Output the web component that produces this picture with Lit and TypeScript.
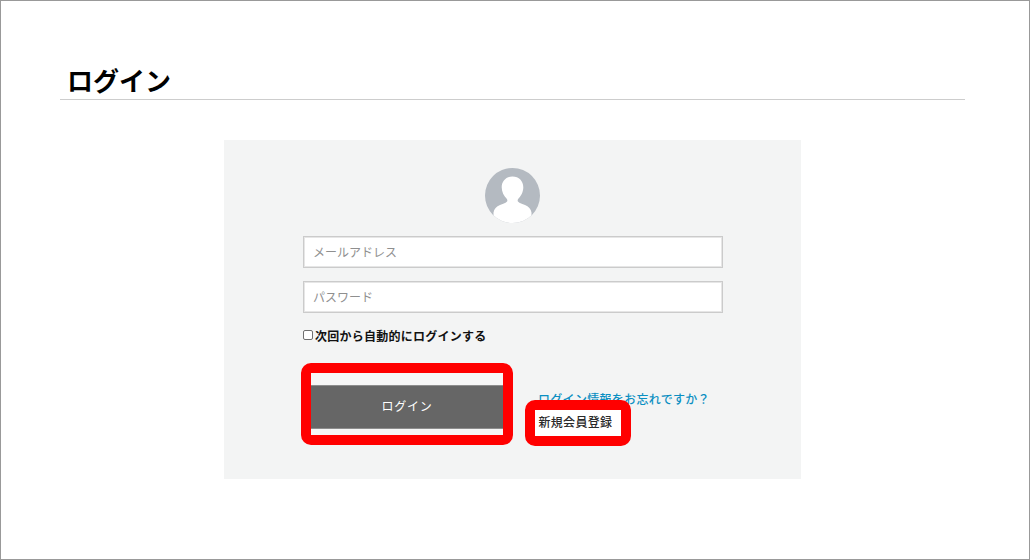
import { LitElement, html, css } from "lit";
import { customElement } from "lit/decorators.js";

@customElement("app-root")
export class AppRoot extends LitElement {
  static styles = css`
    :host {
      display: block;
      font-family: "Liberation Sans", "Noto Sans CJK JP", sans-serif;
    }
    .page {
      position: relative;
      box-sizing: border-box;
      width: 1030px;
      height: 560px;
      border: 1px solid #999;
      background: #fff;
      padding: 0 64px 0 59px;
      overflow: hidden;
    }
    h1 {
      margin: 0;
      height: 99px;
      box-sizing: border-box;
      padding: 61px 0 0 7px;
      font-size: 26px;
      line-height: 36px;
      font-weight: 700;
      color: #000;
      border-bottom: 1px solid #cdcdcd;
      font-family: "Noto Sans CJK JP", sans-serif;
    }
    .card {
      box-sizing: border-box;
      width: 577px;
      height: 339px;
      margin: 40px 0 0 164px;
      background: #f3f4f4;
      padding: 28px 78px 0 79px;
      display: flex;
      flex-direction: column;
    }
    .avatar {
      display: block;
      width: 55px;
      height: 55px;
      align-self: center;
      margin: 0 0 13px -1px;
    }
    .input {
      box-sizing: border-box;
      width: 420px;
      height: 32px;
      background: #fff;
      border: 1px solid #cbcbcb;
      box-shadow: inset 0 0 0 1px #e6e6e6;
      padding: 0 9px;
      font-size: 12px;
      line-height: 30px;
      color: #8f8f8f;
      font-family: "Noto Sans CJK JP", sans-serif;
    }
    .input + .input {
      margin-top: 13px;
    }
    .remember {
      display: flex;
      align-items: center;
      gap: 3px;
      margin-top: 12px;
      height: 20px;
      font-size: 12px;
      font-weight: 700;
      color: #111;
      font-family: "Noto Sans CJK JP", sans-serif;
      letter-spacing: 0.25px;
    }
    .box {
      box-sizing: border-box;
      width: 10px;
      height: 10px;
      margin-right: -1px;
      background: #fff;
      border: 1px solid #6f6f6f;
      border-radius: 2px;
    }
    .actions {
      display: flex;
      margin-top: 28px;
      margin-left: 8px;
    }
    .btn-wrap {
      box-sizing: border-box;
      width: 192px;
      height: 62px;
      background: #f6f6f6;
      padding-top: 12px;
    }
    .btn {
      height: 44px;
      box-sizing: border-box;
      border-top: 1px solid #8d8d8d;
      border-bottom: 1px solid #8d8d8d;
      background: #666;
      color: #fff;
      font-size: 12px;
      letter-spacing: 0.8px;
      padding-bottom: 3px;
      display: flex;
      align-items: center;
      justify-content: center;
      font-family: "Noto Sans CJK JP", sans-serif;
    }
    .links {
      margin-left: 35px;
      padding-top: 18px;
      display: flex;
      flex-direction: column;
      font-size: 12px;
      font-weight: 500;
      font-family: "Noto Sans CJK JP", sans-serif;
      letter-spacing: 0.3px;
    }
    .forgot {
      color: #0b8fc2;
      line-height: 16px;
    }
    .hl {
      position: absolute;
      box-sizing: border-box;
      border: 10px solid #f00;
      border-radius: 10px;
      pointer-events: none;
    }
    .hl-btn {
      left: 300px;
      top: 362px;
      width: 212px;
      height: 82px;
    }
    .hl-link {
      left: 524px;
      top: 399px;
      width: 106px;
      height: 46px;
    }
    .hl-fill {
      position: absolute;
      left: 534px;
      top: 409px;
      width: 86px;
      height: 26px;
      background: #fff;
    }
    .hl-text {
      position: absolute;
      left: 537.5px;
      top: 413px;
      font-size: 12px;
      line-height: 16px;
      font-weight: 500;
      color: #2a2a2a;
      letter-spacing: 0.3px;
      font-family: "Noto Sans CJK JP", sans-serif;
    }
  `;

  render() {
    return html`
      <div class="page">
        <h1>ログイン</h1>
        <div class="card">
          <svg class="avatar" viewBox="0 0 55 55" aria-hidden="true">
            <defs>
              <clipPath id="c"><circle cx="27.5" cy="27.5" r="27.500"></circle></clipPath>
            </defs>
            <circle cx="27.5" cy="27.500" r="27.500" fill="#b4bac1"></circle>
            <path
              clip-path="url(#c)"
              fill="#fff"
              d="M27.500 8.500c-6.500 0-10.800 4.700-10.800 10.800 0 4.500 2.200 8.800 4.800 11.300 1 1 1.200 2.300.3 3.200-1.300 1.400-4.200 2.300-6.800 3.300-3.600 1.400-5.900 3.800-6.500 7.400V56h38V44.500c-.6-3.600-2.900-6-6.500-7.400-2.600-1-5.500-1.900-6.800-3.300-.9-.9-.7-2.200.3-3.200 2.600-2.500 4.800-6.800 4.800-11.300 0-6.100-4.300-10.800-10.800-10.800z"
            ></path>
          </svg>
          <div class="input">メールアドレス</div>
          <div class="input">パスワード</div>
          <div class="remember"><span class="box"></span>次回から自動的にログインする</div>
          <div class="actions">
            <div class="btn-wrap"><div class="btn">ログイン</div></div>
            <div class="links">
              <span class="forgot">ログイン情報をお忘れですか？</span>
            </div>
          </div>
        </div>
        <div class="hl-fill"></div>
        <div class="hl-text">新規会員登録</div>
        <div class="hl hl-btn"></div>
        <div class="hl hl-link"></div>
      </div>
    `;
  }
}
